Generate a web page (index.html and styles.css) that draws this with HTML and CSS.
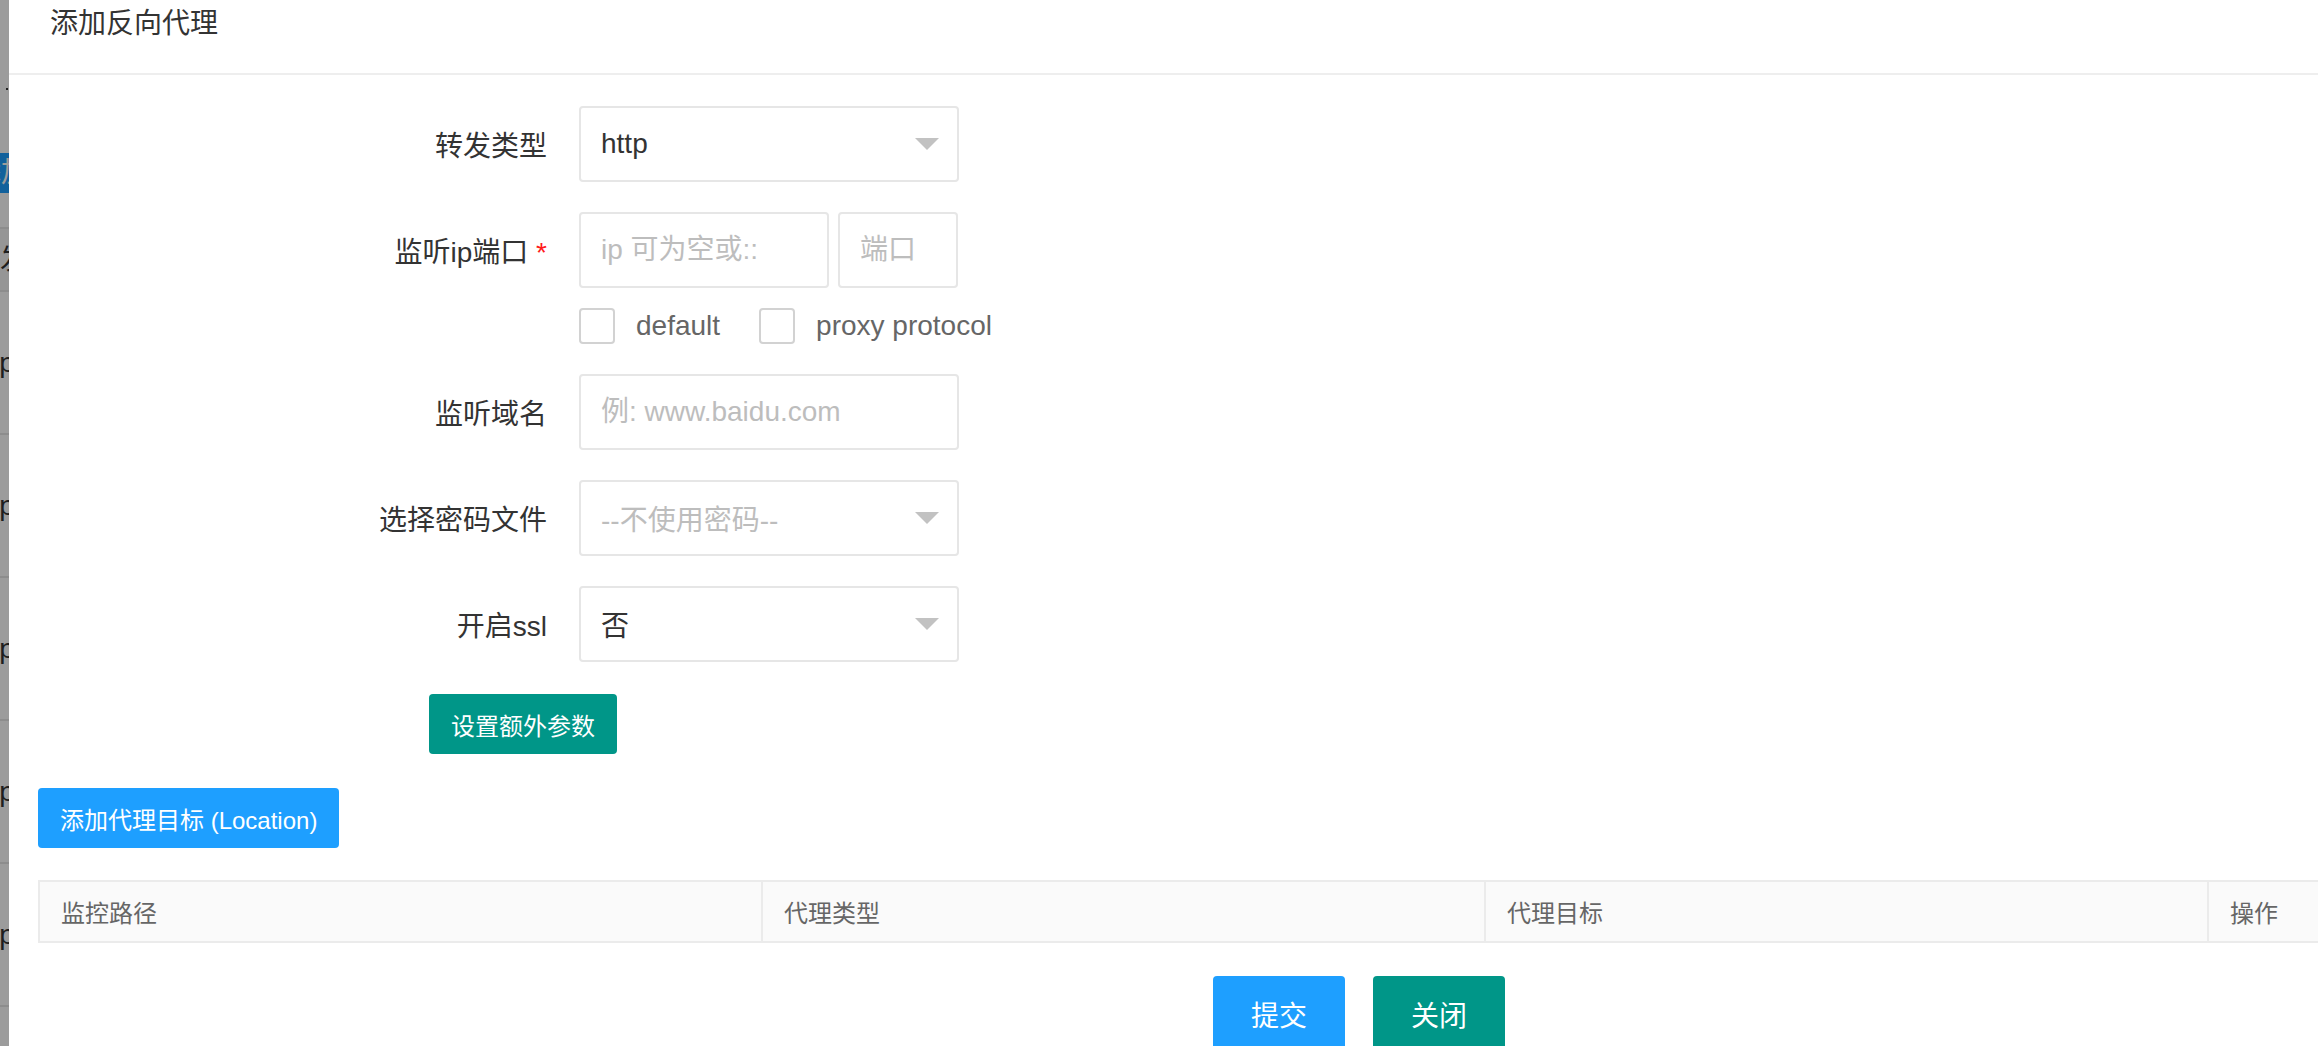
FILE: index.html
```html
<!DOCTYPE html>
<html lang="zh-CN">
<head>
<meta charset="utf-8">
<title>添加反向代理</title>
<link rel="stylesheet" href="styles.css">
</head>
<body>
<div class="stage">
  <div class="backdrop">
    <div class="bd-gap-top"></div>
    <div class="bd-dash"><span class="bd-dash-mark"></span></div>
    <div class="bd-gap-mid"></div>
    <div class="bd-btn"><span>添加</span></div>
    <div class="bd-gap-low"></div>
    <div class="bd-th"><span>转发</span></div>
    <div class="bd-tr"><span>http</span></div>
    <div class="bd-tr"><span>http</span></div>
    <div class="bd-tr"><span>http</span></div>
    <div class="bd-tr"><span>http</span></div>
    <div class="bd-tr"><span>http</span></div>
    <div class="bd-tr"><span>http</span></div>
  </div>

  <div class="modal">
    <div class="modal-head">添加反向代理</div>
    <div class="modal-body">
      <div class="form">
        <div class="form-item">
          <label class="form-label">转发类型</label>
          <div class="select"><span class="select-value">http</span><i class="select-arrow"></i></div>
        </div>

        <div class="form-item form-item-checks">
          <label class="form-label">监听ip端口 <span class="req">*</span></label>
          <div class="input-group">
            <input class="input input-ip" type="text" placeholder="ip 可为空或::">
            <input class="input input-port" type="text" placeholder="端口">
          </div>
        </div>
        <div class="check-row">
          <span class="check check-first"><i class="check-box"></i><span>default</span></span>
          <span class="check"><i class="check-box"></i><span>proxy protocol</span></span>
        </div>

        <div class="form-item">
          <label class="form-label">监听域名</label>
          <input class="input input-wide" type="text" placeholder="例: www.baidu.com">
        </div>

        <div class="form-item">
          <label class="form-label">选择密码文件</label>
          <div class="select"><span class="select-value is-placeholder">--不使用密码--</span><i class="select-arrow"></i></div>
        </div>

        <div class="form-item form-item-last">
          <label class="form-label">开启ssl</label>
          <div class="select"><span class="select-value">否</span><i class="select-arrow"></i></div>
        </div>

        <div class="extra-row">
          <button class="btn btn-sm btn-green" type="button">设置额外参数</button>
        </div>
      </div>

      <div class="location-row">
        <button class="btn btn-sm btn-blue" type="button">添加代理目标 (Location)</button>
      </div>

      <div class="table">
        <div class="th">监控路径</div>
        <div class="th">代理类型</div>
        <div class="th">代理目标</div>
        <div class="th th-last">操作</div>
      </div>

      <div class="footer">
        <button class="btn btn-lg btn-blue" type="button">提交</button>
        <button class="btn btn-lg btn-green" type="button">关闭</button>
      </div>
    </div>
  </div>
</div>
</body>
</html>
```
FILE: styles.css
```css
html, body {
  margin: 0;
  padding: 0;
  height: 100%;
  overflow: hidden;
}

body {
  font-family: "Liberation Sans", "Noto Sans CJK SC", sans-serif;
  color: #333;
  background: #fff;
}

.stage {
  display: flex;
  height: 1046px;
  overflow: hidden;
}

/* ---------- dimmed page behind the dialog ---------- */
.backdrop {
  width: 9px;
  flex: none;
  overflow: hidden;
  position: relative;
  background: #fff;
  display: flex;
  flex-direction: column;
  font-size: 28px;
  line-height: 1;
  white-space: nowrap;
}

.backdrop::after {
  content: "";
  position: absolute;
  inset: 0;
  background: rgba(0, 0, 0, 0.39);
}

.bd-gap-top { height: 88px; flex: none; }

.bd-dash {
  height: 3px;
  flex: none;
  display: flex;
  justify-content: flex-end;
}

.bd-dash-mark {
  width: 2px;
  height: 2px;
  background: #333;
  margin-right: 1px;
}

.bd-gap-mid { height: 62px; flex: none; }

.bd-btn {
  height: 40px;
  flex: none;
  background: #1e9fff;
  color: #fff;
  display: flex;
  align-items: center;
}

.bd-btn span { margin-left: -27px; }

.bd-gap-low { height: 34px; flex: none; }

.bd-th {
  height: 61px;
  flex: none;
  border-top: 2px solid #e6e6e6;
  background: #f5f5f5;
  display: flex;
  align-items: center;
}

.bd-th span { margin-left: -28px; }

.bd-tr {
  height: 141px;
  flex: none;
  border-top: 2px solid #e6e6e6;
  display: flex;
  align-items: center;
}

.bd-tr span { margin-left: -32px; }

/* ---------- dialog ---------- */
.modal {
  width: 2700px;
  flex: none;
  background: #fff;
}

.modal-head {
  height: 73px;
  border-bottom: 2px solid #eeeeee;
  padding-left: 41px;
  font-size: 28px;
  line-height: 48px;
  color: #333;
}

.modal-body {
  padding: 31px 29px 0;
}

.form {
  padding-left: 261px;
}

.form-item {
  display: flex;
  align-items: center;
  margin-bottom: 30px;
}

.form-item-checks { margin-bottom: 20px; }
.form-item-last { margin-bottom: 32px; }

.form-label {
  width: 248px;
  margin-right: 32px;
  flex: none;
  text-align: right;
  font-size: 28px;
  color: #333;
}

.req { color: #ff1a1a; }

.select,
.input {
  height: 76px;
  box-sizing: border-box;
  border: 2px solid #e6e6e6;
  border-radius: 4px;
  background: #fff;
  font-family: inherit;
  font-size: 28px;
  color: #333;
  padding: 0 20px;
  margin: 0;
  outline: none;
}

.input::placeholder { color: #bdbdbd; }

.select {
  width: 380px;
  display: flex;
  align-items: center;
  justify-content: space-between;
  padding-right: 18px;
}

.select-value.is-placeholder { color: #bdbdbd; }

.select-arrow {
  width: 0;
  height: 0;
  border-left: 12px solid transparent;
  border-right: 12px solid transparent;
  border-top: 12px solid #c2c2c2;
}

.input-group {
  display: flex;
  gap: 9px;
}

.input-ip { width: 250px; }
.input-port { width: 120px; }
.input-wide { width: 380px; }

.check-row {
  display: flex;
  align-items: center;
  height: 36px;
  margin-left: 280px;
  margin-bottom: 30px;
}

.check {
  display: flex;
  align-items: center;
  font-size: 28px;
  color: #666;
}

.check-first { margin-right: 39px; }

.check-box {
  width: 36px;
  height: 36px;
  box-sizing: border-box;
  border: 2px solid #d2d2d2;
  border-radius: 4px;
  margin-right: 21px;
  background: #fff;
}

/* ---------- buttons ---------- */
.btn {
  display: inline-flex;
  align-items: center;
  justify-content: center;
  border: none;
  border-radius: 4px;
  color: #fff;
  font-family: inherit;
  cursor: pointer;
  margin: 0;
  white-space: nowrap;
}

.btn-sm {
  height: 60px;
  padding: 0 22px;
  font-size: 24px;
}

.btn-lg {
  height: 76px;
  width: 132px;
  padding: 0;
  font-size: 28px;
}

.btn-green { background: #009688; }
.btn-blue { background: #1e9fff; }

.extra-row {
  display: flex;
  margin-left: 130px;
  margin-bottom: 34px;
}

.location-row {
  display: flex;
  margin-bottom: 32px;
}

/* ---------- table header ---------- */
.table {
  display: grid;
  grid-template-columns: 723px 723px 723px 1fr;
  height: 63px;
  box-sizing: border-box;
  border: 2px solid #ebebeb;
  background: #fafafa;
}

.th {
  display: flex;
  align-items: center;
  padding: 0 21px;
  font-size: 24px;
  color: #666;
  border-right: 2px solid #ebebeb;
}

.th-last { border-right: none; }

.footer {
  display: flex;
  justify-content: center;
  gap: 28px;
  margin-top: 33px;
}
```
